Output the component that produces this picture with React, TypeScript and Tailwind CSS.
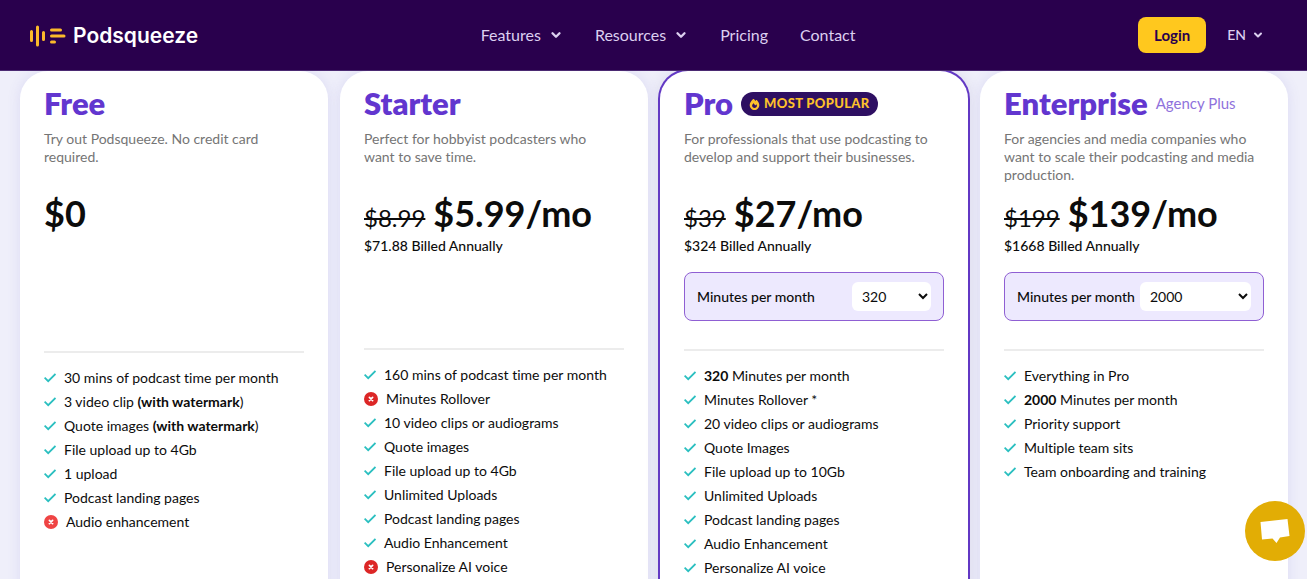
import React, { useState } from "react";
import type { ReactNode } from "react";
import { ChevronDown } from "lucide-react";
import { FaFire } from "react-icons/fa6";

type Feature = { label: ReactNode; included?: boolean };

type Plan = {
  name: string;
  tag?: string;
  popular?: boolean;
  description: string;
  oldPrice?: string;
  price: string;
  billed?: string;
  minutes?: string[];
  selectWidth?: string;
  spacer?: string;
  crossColor?: string;
  features: Feature[];
};

const plans: Plan[] = [
  {
    name: "Free",
    description: "Try out Podsqueeze. No credit card required.",
    price: "$0",
    spacer: "h-[115px]",
    crossColor: "text-[#ef4444]",
    features: [
      { label: "30 mins of podcast time per month" },
      {
        label: (
          <>
            3 video clip <b>(with watermark</b>)
          </>
        ),
      },
      {
        label: (
          <>
            Quote images <b>(with watermark</b>)
          </>
        ),
      },
      { label: "File upload up to 4Gb" },
      { label: "1 upload" },
      { label: "Podcast landing pages" },
      { label: "Audio enhancement", included: false },
    ],
  },
  {
    name: "Starter",
    description: "Perfect for hobbyist podcasters who want to save time.",
    oldPrice: "$8.99",
    price: "$5.99/mo",
    billed: "$71.88 Billed Annually",
    spacer: "h-[92px]",
    crossColor: "text-[#dc2626]",
    features: [
      { label: "160 mins of podcast time per month" },
      { label: "Minutes Rollover", included: false },
      { label: "10 video clips or audiograms" },
      { label: "Quote images" },
      { label: "File upload up to 4Gb" },
      { label: "Unlimited Uploads" },
      { label: "Podcast landing pages" },
      { label: "Audio Enhancement" },
      { label: "Personalize AI voice", included: false },
    ],
  },
  {
    name: "Pro",
    popular: true,
    description:
      "For professionals that use podcasting to develop and support their businesses.",
    oldPrice: "$39",
    price: "$27/mo",
    billed: "$324 Billed Annually",
    minutes: ["320"],
    selectWidth: "w-[79px]",
    features: [
      {
        label: (
          <>
            <b>320</b> Minutes per month
          </>
        ),
      },
      { label: "Minutes Rollover *" },
      { label: "20 video clips or audiograms" },
      { label: "Quote Images" },
      { label: "File upload up to 10Gb" },
      { label: "Unlimited Uploads" },
      { label: "Podcast landing pages" },
      { label: "Audio Enhancement" },
      { label: "Personalize AI voice" },
    ],
  },
  {
    name: "Enterprise",
    tag: "Agency Plus",
    description:
      "For agencies and media companies who want to scale their podcasting and media production.",
    oldPrice: "$199",
    price: "$139/mo",
    billed: "$1668 Billed Annually",
    minutes: ["2000"],
    selectWidth: "w-[111px]",
    features: [
      { label: "Everything in Pro" },
      {
        label: (
          <>
            <b>2000</b> Minutes per month
          </>
        ),
      },
      { label: "Priority support" },
      { label: "Multiple team sits" },
      { label: "Team onboarding and training" },
    ],
  },
];

const LogoIcon = () => (
  <svg
    width="37"
    height="22"
    viewBox="0 0 37 22"
    fill="none"
    stroke="#fbb92b"
    strokeWidth="3"
    strokeLinecap="round"
    aria-hidden="true"
  >
    <path d="M2.5 6.5v9M8.5 2v18M14.5 7.5v7" />
    <path d="M22.5 5h9M22.5 11h12.5M22.5 17h3" />
  </svg>
);

const CheckIcon = () => (
  <svg width="12" height="10" viewBox="0 0 12 10" fill="none" aria-hidden="true" className="shrink-0">
    <path d="M0.6 4.6L4.2 8.2L11.5 0.9" stroke="#2bbfc0" strokeWidth="1.8" />
  </svg>
);

const CrossIcon = ({ color = "" }: { color?: string }) => (
  <svg width="14" height="14" viewBox="0 0 14 14" aria-hidden="true" className={`shrink-0 ${color}`}>
    <circle cx="7" cy="7" r="7" fill="currentColor" />
    <path d="M5.4 5.4L8.6 8.6M8.6 5.4L5.4 8.6" stroke="#fff" strokeWidth="1.7" strokeLinecap="round" />
  </svg>
);

function Header() {
  return (
    <header className="relative z-10 flex h-[71px] shrink-0 items-center justify-between border-b border-[#4b2a72] bg-[#29004d] pl-[29px] pr-[43px]">
      <a href="#" className="flex items-center gap-[7px] pt-0.5 text-white">
        <LogoIcon />
        <span className="font-['Inter',sans-serif] text-[21px] font-semibold">
          Podsqueeze
        </span>
      </a>
      <nav className="flex items-center gap-8 text-base text-[#dccff0]">
        <button className="flex items-center gap-2">
          Features <ChevronDown size={14} strokeWidth={4} />
        </button>
        <button className="flex items-center gap-2">
          Resources <ChevronDown size={14} strokeWidth={4} />
        </button>
        <a href="#">Pricing</a>
        <a href="#">Contact</a>
      </nav>
      <div className="flex items-center gap-[21px]">
        <a
          href="#"
          className="rounded-lg bg-[#ffc81e] px-4 py-2 text-[15px] leading-5 font-bold text-[#29004d]"
        >
          Login
        </a>
        <button className="flex items-center gap-1.5 text-sm font-medium text-[#dccff0]">
          EN <ChevronDown size={12} strokeWidth={4} />
        </button>
      </div>
    </header>
  );
}

function MinutesPicker({ plan }: { plan: Plan }) {
  const options = plan.minutes ?? [];
  const [minutes, setMinutes] = useState(options[0]);
  const id = `minutes-${plan.name.toLowerCase()}`;

  return (
    <div className="mt-4 mb-7 flex h-[49px] items-center justify-between rounded-lg border border-[#8f5fd3] bg-[#ede9fe] px-3">
      <label htmlFor={id} className="text-sm font-medium whitespace-nowrap">
        Minutes per month
      </label>
      <select
        id={id}
        value={minutes}
        onChange={(e) => setMinutes(e.target.value)}
        className={`h-[29px] rounded-md bg-white pl-1.5 text-sm ${plan.selectWidth}`}
      >
        {options.map((option) => (
          <option key={option}>{option}</option>
        ))}
      </select>
    </div>
  );
}

function PlanCard({ plan }: { plan: Plan }) {
  return (
    <section
      className={`rounded-[28px] bg-white px-6 pt-4 pb-12 ${
        plan.popular
          ? "ring-2 ring-[#6339c4] shadow-[0_0_16px_rgba(60,50,110,0.14)]"
          : "shadow-[0_0_14px_rgba(90,80,200,0.12)]"
      }`}
    >
      <div className="mb-[11px] flex h-8 items-center gap-2">
        <h2 className="text-[31px] font-extrabold text-[#6236cf]">{plan.name}</h2>
        {plan.popular && (
          <span className="mt-0.5 flex h-6 items-center gap-1 rounded-full bg-[#2e0f62] px-2 text-[13px] font-black tracking-wide whitespace-nowrap text-[#fdc12b]">
            <FaFire size={11} /> MOST POPULAR
          </span>
        )}
        {plan.tag && <span className="text-[15px] text-[#8f72dc]">{plan.tag}</span>}
      </div>
      <p className="min-h-[54px] pr-1.5 text-sm leading-[18px] text-[#757575]">
        {plan.description}
      </p>
      <p className="mt-1.5 flex h-[46px] items-baseline gap-2">
        {plan.oldPrice && <s className="text-2xl leading-none">{plan.oldPrice}</s>}
        <span className="text-4xl leading-[46px] font-bold">{plan.price}</span>
      </p>
      {plan.billed && <p className="text-sm leading-5 font-medium">{plan.billed}</p>}
      {plan.minutes ? <MinutesPicker plan={plan} /> : <div className={plan.spacer} />}
      <hr className="border-t-2 border-[#ececec]" />
      <ul className="mt-[13px] text-sm leading-6">
        {plan.features.map((feature, i) => (
          <li key={i} className="flex items-center gap-2 leading-6">
            {feature.included === false ? <CrossIcon color={plan.crossColor} /> : <CheckIcon />}
            <span>{feature.label}</span>
          </li>
        ))}
      </ul>
    </section>
  );
}

function App() {
  return (
    <div className="flex h-screen flex-col overflow-hidden bg-[#efeffa] font-['Lato',sans-serif] text-[#0c0c0c] [font-variant-ligatures:none]">
      <Header />
      <main className="grid shrink-0 grid-cols-4 gap-3 pr-[19px] pl-5">
        {plans.map((plan) => (
          <PlanCard key={plan.name} plan={plan} />
        ))}
      </main>
      <button
        aria-label="Open chat"
        className="fixed right-0.5 bottom-[18px] z-20 flex size-[60px] items-center justify-center rounded-full bg-[#e2ad05]"
      >
        <svg width="30" height="26" viewBox="0 0 30 26" fill="#fff" aria-hidden="true">
          <path d="M0.5 4L27.5 1L29.5 18L20 19.5L16.5 25L12.5 20.5L2 21.5Z" />
        </svg>
      </button>
    </div>
  );
}

export default App;
